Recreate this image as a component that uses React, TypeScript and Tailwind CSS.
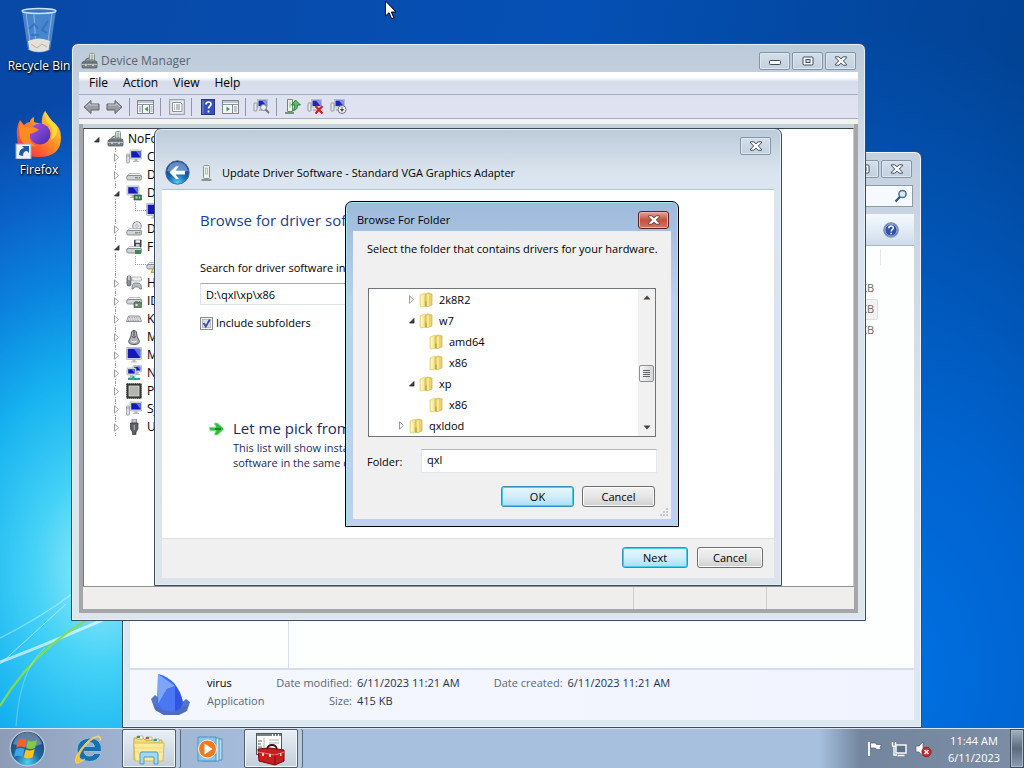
import React from "react";

const FONT = "font-['Open_Sans','Noto_Sans',sans-serif]";

/* ---------- small drawings ---------- */

const CloseGlyph = ({ red = false }: { red?: boolean }) => (
  <svg width="14" height="10" viewBox="0 0 14 10">
    <path d="M1.5 .8h3.3L7 2.800 9.200 .8h3.300v1L9.300 5l3.200 3.200v1H9.200L7 7.200 4.800 9.200H1.500v-1L4.700 5 1.500 1.800z" fill="#fff" stroke={red ? "#6b3a3a" : "#3f4a5a"} strokeWidth="1" />
  </svg>
);
const MinGlyph = () => (
  <svg width="14" height="10" viewBox="0 0 14 10">
    <rect x="1.5" y="4.5" width="11" height="4" rx="1" fill="#fff" stroke="#3f4a5a" />
  </svg>
);
const MaxGlyph = () => (
  <svg width="14" height="10" viewBox="0 0 14 10">
    <rect x="2" y="1" width="10" height="8" rx="1" fill="#fff" stroke="#3f4a5a" />
    <rect x="5" y="3.5" width="4" height="3" fill="#d5dfe9" stroke="#3f4a5a" />
  </svg>
);

const Toolbox = () => (
  <svg width="17" height="17" viewBox="0 0 17 17" className="shrink-0">
    <rect x="8.5" y=".5" width="5" height="9" rx="1" fill="#eef2ee" stroke="#8b938d" />
    <rect x="10" y="2" width="2" height="5" fill="#b8d4b0" stroke="#7f9a7a" strokeWidth=".5" />
    <path d="M2 9l3-2h8l3 2z" fill="#9da5ab" stroke="#5b6268" strokeWidth=".7" />
    <rect x="1" y="9" width="15" height="6" rx="1" fill="#7b838a" stroke="#4e555b" strokeWidth=".8" />
    <path d="M1 11.500h15" stroke="#d5d9dc" strokeWidth=".8" />
    <path d="M4 10.5h2v3H4zM11 10.5h2v3h-2z" fill="#e6e8ea" stroke="#454a4f" strokeWidth=".4" />
    <path d="M4.500 7.500Q5 5 8 5" fill="none" stroke="#565c62" />
  </svg>
);

const Screen = ({ x = 4, y = 1, w = 12, h = 9 }: { x?: number; y?: number; w?: number; h?: number }) => (
  <g>
    <rect x={x} y={y} width={w} height={h} rx=".6" fill="#e2e6ea" stroke="#a3abb5" strokeWidth=".7" />
    <rect x={x + 1.200} y={y + 1.200} width={w - 2.400} height={h - 2.600} fill="#1418b4" />
    <path d={`M${x + w / 2} ${y + 1.200}L${x + w - 1.200} ${y + 1.200}V${y + h - 1.600}z`} fill="#5b74e6" />
    <path d={`M${x + w / 2 - 1.500} ${y + h}h3v2h1.500v1h-6v-1h1.500z`} fill="#b4bac2" />
  </g>
);
const Drive = ({ y = 8 }: { y?: number }) => (
  <g>
    <path d={`M1 ${y + 2}l2.500-2.500h10l2 2.500z`} fill="#f1f2f3" stroke="#9a9ea3" strokeWidth=".6" />
    <rect x=".8" y={y + 1.500} width="14.800" height="4.500" rx="1.500" fill="#cfd2d6" stroke="#777c82" strokeWidth=".8" />
    <path d={`M9 ${y + 3.800}h3`} stroke="#555" strokeWidth=".8" />
    <circle cx="13.500" cy={y + 3.800} r=".8" fill="#37a34a" />
  </g>
);

const DeviceIcon = ({ kind }: { kind: string }) => (
  <svg width="16" height="16" viewBox="0 0 16 16" className="shrink-0">
    {kind === "computer" && (<><Screen /><rect x=".5" y="5" width="3" height="9" rx=".8" fill="#dde1e5" stroke="#82898f" strokeWidth=".7" /><path d="M1.300 7h1.500" stroke="#555" strokeWidth=".7" /></>)}
    {kind === "disk" && <Drive y={7} />}
    {kind === "warning" && (<><Drive y={6} /><path d="M10 6l5.500 9.500H5z" fill="#f5d534" stroke="#a58a10" strokeWidth=".7" /><path d="M10 9v3.500M10 13.500v1" stroke="#222" /></>)}
    {kind === "display" && (<><Screen x={1} w={12} /><path d="M8 10h7.500v5H8z" fill="#3b7f4c" stroke="#205330" strokeWidth=".6" /><path d="M9.500 11.500h2v2h-2zM13 11.500h1v2h-1z" fill="#c8d9b8" /></>)}
    {kind === "dvd" && (<><circle cx="11" cy="5" r="4.300" fill="#e3e5e8" stroke="#8d9299" /><circle cx="11" cy="5" r="1.300" fill="#fff" stroke="#8d9299" strokeWidth=".6" /><Drive y={8} /></>)}
    {kind === "floppy" && (<><rect x="8" y=".7" width="7.500" height="7.500" rx=".6" fill="#40464c" /><rect x="9.500" y="1.200" width="4.500" height="2.600" fill="#eef0f2" /><rect x="10" y="5" width="3.500" height="3" fill="#c3c8cd" /><Drive y={8} /><rect x="9" y="11" width="6" height="4" fill="#3d8a50" /></>)}
    {kind === "hid" && (<><rect x="6" y="2" width="9.500" height="4" rx=".6" fill="#eceef0" stroke="#777" strokeWidth=".7" strokeDasharray="1 .5" /><rect x="1" y="1" width="4" height="10" rx="2" fill="#8c9298" stroke="#44484c" strokeWidth=".7" /><path d="M3 1v4" stroke="#fff" /><path d="M6 14q0-6 2.500-6h4q3 0 3 6-2 1-3-2H8.500Q7.500 15 6 14z" fill="#b8bdc3" stroke="#60656b" strokeWidth=".7" /></>)}
    {kind === "ide" && (<><Drive y={5} /><path d="M8 9.500h7.500v5H8z" fill="#5f9169" stroke="#2b5034" strokeWidth=".6" /><path d="M9.500 11h2v2h-2z" fill="#dfe9d5" /></>)}
    {kind === "keyboard" && (<><path d="M2.500 5h11l2 5.500H.500z" fill="#e4e6e8" stroke="#777c82" strokeWidth=".8" /><path d="M3 6.500h10M2.500 8h11M2 9.500h12" stroke="#888d93" strokeWidth=".7" strokeDasharray="1 .7" /></>)}
    {kind === "mouse" && (<><path d="M5.500 3Q8-.5 10.500 3l.5 4 2.500 5.500Q13 15.500 8 15.500T2.500 12.500L5 7z" fill="#aeb2b7" stroke="#44484c" strokeWidth=".9" /><path d="M8 2v5M6 7.500q2 2 4 0" stroke="#33373b" strokeWidth=".9" fill="none" /><path d="M5.500 12q2.500 2.500 5 0" stroke="#fff" fill="none" /></>)}
    {kind === "monitor" && <Screen x={.5} y={.5} w={15} h={12} />}
    {kind === "network" && (<><Screen x={7} y={.5} w={8.500} h={6.500} /><Screen x={1} y={3} w={9} h={7} /><path d="M7.500 11v2M2 14h12" stroke="#27a889" strokeWidth="2" /></>)}
    {kind === "cpu" && (<><rect x=".8" y=".8" width="14.400" height="14.400" fill="#3c3f3a" stroke="#23251f" strokeDasharray="1.500 .5" /><rect x="3" y="3" width="10" height="10" fill="#b2b6b0" stroke="#e1e3df" strokeWidth=".7" /></>)}
    {kind === "usb" && (<><rect x="6" y="0" width="4.500" height="4" fill="#c5c8cb" stroke="#6c7074" strokeWidth=".7" /><path d="M4.500 4h7.500v6l-2 3v2.500H6.500V13l-2-3z" fill="#5d6165" stroke="#35383b" strokeWidth=".7" /><path d="M8.300 6v5" stroke="#c9ccce" strokeWidth=".8" /></>)}
  </svg>
);

const Twisty = ({ open }: { open: boolean }) => (
  <svg width="9" height="9" viewBox="0 0 9 9" className="shrink-0">
    {open ? <path d="M7 2.500v4.500H2.500z" fill="#404040" stroke="#262626" strokeWidth=".8" /> : <path d="M2.500 .8L6.500 4.500l-4 3.700z" fill="#fff" stroke="#9c9c9c" />}
  </svg>
);

const Folder = () => (
  <svg width="14" height="16" viewBox="0 0 14 16" className="shrink-0">
    <path d="M1 3l5-2 1 1v12l-5 1-1-1z" fill="#f6ea9c" stroke="#e0cb6a" strokeWidth=".7" />
    <path d="M6 2.500l3-1.500 4 1v11l-4 1.500-3-.5z" fill="#e9d266" stroke="#cfb04b" strokeWidth=".7" />
    <path d="M9 2.500v11.500" stroke="#faf3c4" strokeWidth="1.200" />
    <path d="M7 9.500v5" stroke="#a98e35" strokeWidth=".9" />
    <path d="M2.800 3.500v10" stroke="#fdf8d2" strokeWidth="1.200" />
  </svg>
);

/* ---------- shared controls ---------- */

const CaptionButton = ({ label, children }: { label: string; children: React.ReactNode }) => (
  <button aria-label={label} className="flex h-[18px] w-[31px] items-center justify-center rounded-[2px] border border-[#8594a8] bg-linear-to-b from-[#d3dfea] to-[#c3d0de] shadow-[inset_0_0_0_1px_#dde7f0]">
    {children}
  </button>
);

const PushButton = ({ children, primary = false, className = "w-[66px]" }: { children: React.ReactNode; primary?: boolean; className?: string }) => (
  <button
    className={
      "flex h-[21px] items-center justify-center rounded-[3px] border text-[11px] leading-4 text-black " +
      (primary
        ? "border-[#2f8fc0] bg-linear-to-b from-[#e8f6fd] via-[#d3eefb] to-[#a6def8] shadow-[inset_0_0_0_1px_#48cdf2] "
        : "border-[#707070] bg-linear-to-b from-[#f2f2f2] via-[#e6e6e6] to-[#cfcfcf] shadow-[inset_0_0_0_1px_#fafafa] ") +
      className
    }
  >
    {children}
  </button>
);

/* ---------- explorer ---------- */

const Explorer = () => (
  <section className="absolute left-[122px] top-[151px] flex h-[577px] w-[800px] flex-col rounded-t-[7px] border border-[#3c4c5c] bg-linear-to-b from-[#c3d0de] via-[#dbe5ef] to-[#dce8f0] px-[7px] pb-[7px] shadow-[inset_0_0_0_1px_#eef4f9]">
    <header className="flex h-[33px] items-start justify-end gap-[2px] px-[2px] pt-[8px]">
      <CaptionButton label="Minimize explorer"><MinGlyph /></CaptionButton>
      <CaptionButton label="Maximize explorer"><MaxGlyph /></CaptionButton>
      <CaptionButton label="Close explorer"><CloseGlyph /></CaptionButton>
    </header>
    <div className="flex h-[29px] justify-end px-px">
      <label className="flex h-[22px] w-[180px] items-center border border-[#8d9aab] bg-[#f6fafd] pr-1">
        <input aria-label="Search folder" className="min-w-0 flex-1 bg-transparent outline-none" />
        <svg width="14" height="14" viewBox="0 0 14 14"><circle cx="8.500" cy="5" r="3.600" fill="#dceaf4" stroke="#47709a" strokeWidth="1.500" /><path d="M6 7.800L1.500 12.500" stroke="#2f5478" strokeWidth="2.200" /></svg>
      </label>
    </div>
    <div className="flex h-[32px] items-center justify-end border-b border-[#a9b8cb] bg-linear-to-b from-[#f4f9fd] via-[#e3edf7] to-[#cfdbea] pr-[15px]">
      <button aria-label="Help">
        <svg width="16" height="16" viewBox="0 0 16 16"><circle cx="8" cy="8" r="7.200" fill="#2d53ac" stroke="#8694a8" strokeWidth="1.300" /><circle cx="8" cy="8" r="6" fill="none" stroke="#c5d4ee" strokeWidth=".7" /><path d="M5.800 6.300Q5.800 4 8.100 4t2.200 2c0 1.500-2.100 1.600-2.100 3.400M8.200 10.800v1.500" fill="none" stroke="#fff" strokeWidth="1.500" /></svg>
      </button>
    </div>
    <div className="flex min-h-0 flex-1 bg-[#fdfefe]">
      <aside className="w-[159px] border-r border-[#d5e1ee]" />
      <div className="flex flex-1 flex-col items-end pr-[36px] pt-[3px] text-[11px] text-[#6d6d6d]">
        <div className="mr-[-3px] h-[16px] w-px bg-[#e2e8ee]" />
        <div className="mt-[13px] flex h-[21px] items-center border border-transparent pr-[3px]">17 KB</div>
        <div className="flex h-[21px] w-[500px] items-center justify-end rounded-[2px] border border-[#dcdcdc] bg-[#f2f2f2] pr-[3px]">415 KB</div>
        <div className="flex h-[21px] items-center border border-transparent pr-[3px]">81 KB</div>
      </div>
    </div>
    <footer className="flex h-[52px] items-start border-t-2 border-[#d6dfe9] bg-linear-to-r from-[#f4f7fd] to-[#f1f4fe] pl-[21px] pt-[4px] text-[11px] leading-[18px] text-[#5a6779]">
      <svg width="40" height="42" viewBox="0 0 40 42">
        <path d="M0 25l4-4 5 4 20 5 6-5 4 3-3 9-8 4H13L4 36z" fill="#5577c6" />
        <path d="M7 0q9 2 16 9 7 8 9 20l-4 9-13 2L6 31z" fill="#3e6cf0" />
        <path d="M7 0l17 12-8 3-9 15z" fill="#7ea6f7" />
        <path d="M16 15l8-3v27l-10-1-7-8z" fill="#4b78f2" />
        <path d="M24 12q6 6 8 17l-4 9-4 1z" fill="#3154e4" />
        <path d="M3 30q6 7 20 8l10-6 4-1-2 6-8 4H13L5 36z" fill="#4a6dc2" />
      </svg>
      <div className="ml-[16px] w-[67px]">
        <div className="text-black">virus</div>
        <div>Application</div>
      </div>
      <dl className="grid grid-cols-[78px_auto] gap-x-[5px]">
        <dt className="text-right">Date modified:</dt>
        <dd className="text-[#1e3250]">6/11/2023 11:21 AM</dd>
        <dt className="text-right">Size:</dt>
        <dd className="text-[#1e3250]">415 KB</dd>
      </dl>
      <dl className="ml-[34px] flex gap-[5px]">
        <dt>Date created:</dt>
        <dd className="text-[#1e3250]">6/11/2023 11:21 AM</dd>
      </dl>
    </footer>
  </section>
);

/* ---------- device manager ---------- */

type Row = { depth: number; open?: boolean; kind: string; text: string };
const DEVICES: Row[] = [
  { depth: 1, open: false, kind: "computer", text: "Computer" },
  { depth: 1, open: false, kind: "disk", text: "Disk drives" },
  { depth: 1, open: true, kind: "display", text: "Display adapters" },
  { depth: 2, kind: "monitor", text: "Standard VGA" },
  { depth: 1, open: false, kind: "dvd", text: "DVD/CD-ROM drives" },
  { depth: 1, open: true, kind: "floppy", text: "Floppy drives" },
  { depth: 2, kind: "warning", text: "Floppy" },
  { depth: 1, open: false, kind: "hid", text: "Human Interface Devices" },
  { depth: 1, open: false, kind: "ide", text: "IDE ATA controllers" },
  { depth: 1, open: false, kind: "keyboard", text: "Keyboards" },
  { depth: 1, open: false, kind: "mouse", text: "Mice" },
  { depth: 1, open: false, kind: "monitor", text: "Monitors" },
  { depth: 1, open: false, kind: "network", text: "Network adapters" },
  { depth: 1, open: false, kind: "cpu", text: "Processors" },
  { depth: 1, open: false, kind: "computer", text: "System devices" },
  { depth: 1, open: false, kind: "usb", text: "USB controllers" },
];

const Panel = ({ dir }: { dir: "left" | "right" }) => (
  <svg width="17" height="16" viewBox="0 0 17 16">
    <rect x=".5" y="1.500" width="16" height="13" fill="#f4f6f8" stroke="#7d8791" />
    <path d="M1 3h15M1 5.500h15" stroke="#8b959f" strokeWidth="1" />
    {dir === "left" ? (
      <><path d="M5.500 6v8M12.500 6v8" stroke="#7d8791" /><path d="M2 8h2.500M2 10h2.500M2 12h2.500M13.500 8h2M13.500 10h2M13.500 12h2" stroke="#8b959f" /><path d="M11 7.500v5L7.500 10z" fill="#43a047" /></>
    ) : (
      <><path d="M10.500 6v8" stroke="#7d8791" /><path d="M12 8h3M12 10h3M12 12h3" stroke="#8b959f" /><path d="M4.500 7.500v5L8 10z" fill="#43a047" /></>
    )}
  </svg>
);
const Arrow = ({ flip = false }: { flip?: boolean }) => (
  <svg width="17" height="16" viewBox="0 0 17 16" className={flip ? "-scale-x-100" : ""}>
    <path d="M1 8l7-6.500V5h8v6H8v3.500z" fill="#999ca1" stroke="#5f6369" />
    <path d="M3 8l4-3.500v1.500h8" fill="none" stroke="#c9ccd0" />
  </svg>
);
const Divider = () => <div className="mr-[4px] ml-[3px] h-[18px] w-px bg-[#8c97ab]" />;

const Tool = ({ label, children }: { label: string; children: React.ReactNode }) => (
  <button aria-label={label} className="flex w-[23px] items-center justify-center">{children}</button>
);
const MiniPc = ({ children }: { children: React.ReactNode }) => (
  <svg width="17" height="17" viewBox="0 0 17 17">
    <rect x="4.500" y="1.500" width="10" height="7.500" fill="#dbe0e6" stroke="#a8b0ba" strokeWidth=".7" />
    <path d="M5.500 2.500h8v5.500h-8z" fill="#2026b8" />
    <path d="M9 2.500h4.500V8z" fill="#8296ec" />
    <rect x="1" y="5" width="3" height="8" rx=".7" fill="#e6e9ec" stroke="#7e858c" strokeWidth=".8" />
    <path d="M6 11h5v2H6z" fill="#b5bbc2" />
    {children}
  </svg>
);

const DeviceManager = () => (
  <section className="absolute left-[71px] top-[43px] flex h-[578px] w-[795px] flex-col rounded-t-[7px] border border-[#3c4c5c] bg-linear-to-b from-[#bccbd9] via-[#d9e2ec] via-25% to-[#dde6ea] px-[7px] pb-[7px] shadow-[inset_0_0_0_1px_#e6eef5]">
    <header className="flex h-[28px] items-start justify-between">
      <h1 className="flex items-center gap-[3px] pl-[2px] pt-[8px] text-[12px] leading-[18px] text-[#5a6470]"><Toolbox />Device Manager</h1>
      <div className="flex gap-[2px] px-[2px] pt-[8px]">
        <CaptionButton label="Minimize"><MinGlyph /></CaptionButton>
        <CaptionButton label="Maximize"><MaxGlyph /></CaptionButton>
        <CaptionButton label="Close Device Manager"><CloseGlyph /></CaptionButton>
      </div>
    </header>
    <nav className="flex h-[23px] items-center gap-[15px] border-b border-[#a5aec0] bg-linear-to-b from-[#ffffff] from-25% via-[#d6dcea] via-45% to-[#dce1ef] pl-[10px] text-[12px] text-black">
      <button>File</button><button>Action</button><button>View</button><button>Help</button>
    </nav>
    <div className="flex h-[24px] items-center border-b border-[#a5aec0] bg-linear-to-b from-[#dde2f0] to-[#e2e2f2] pl-px">
      <Tool label="Back"><Arrow /></Tool>
      <Tool label="Forward"><Arrow flip /></Tool>
      <Divider />
      <Tool label="Show console tree"><Panel dir="left" /></Tool>
      <Divider />
      <Tool label="Properties">
        <svg width="16" height="16" viewBox="0 0 16 16"><rect x=".7" y=".7" width="14.600" height="14.600" fill="#e8ecef" stroke="#8a939c" /><path d="M3.500 3.500h8l1.500 1.500v7.500H3.500z" fill="#fff" stroke="#8a939c" /><path d="M5 6h1M7 6h4M5 8h1M7 8h4M5 10h1M7 10h4" stroke="#7d868f" /></svg>
      </Tool>
      <Divider />
      <Tool label="Help">
        <svg width="14" height="16" viewBox="0 0 14 16"><rect x=".5" y=".5" width="13" height="15" fill="#3a4fb4" stroke="#26378a" /><path d="M2 1v14" stroke="#7e8fdc" /><path d="M5 5.500Q5 3 7.500 3t2.500 2.200C10 7 7.500 7.200 7.500 9.500M7.500 11.500v2" fill="none" stroke="#fff" strokeWidth="1.700" /></svg>
      </Tool>
      <Tool label="Show action pane"><Panel dir="right" /></Tool>
      <Divider />
      <Tool label="Scan for hardware changes">
        <MiniPc><circle cx="10.500" cy="9.500" r="3" fill="#e3edf6" stroke="#7b848e" /><path d="M12.500 11.500l3.500 3.500" stroke="#6b737c" strokeWidth="1.800" /></MiniPc>
      </Tool>
      <Divider />
      <Tool label="Update driver">
        <svg width="17" height="17" viewBox="0 0 17 17"><path d="M3.500 1.500h5v12h-5z" fill="#edf2ea" stroke="#6f8a70" /><path d="M5 3.500h2v6H5z" fill="#b9dba9" /><path d="M1 15h9" stroke="#4c7a50" strokeWidth="1.500" /><path d="M11.500 2L16.500 7h-3c0 4-1.500 5-4.500 5.500 1.500-1.500 1.500-3 1.500-5.500h-3z" fill="#5dbb6c" stroke="#146a2a" strokeWidth=".8" /></svg>
      </Tool>
      <Tool label="Uninstall"><MiniPc><path d="M8.500 8l7 7.500M15.500 8l-7 7.500" stroke="#d81e1e" strokeWidth="2.200" /></MiniPc></Tool>
      <Tool label="Disable"><MiniPc><circle cx="12" cy="11.500" r="4" fill="#f1f2f3" stroke="#6d747b" /><path d="M12 9v3M10.500 11.500l1.500 1.800 1.500-1.800z" fill="#444" stroke="#444" strokeWidth=".9" /></MiniPc></Tool>
    </div>
    <div className="h-[5px] bg-[#f3f3ee]" />
    <div className="flex min-h-0 flex-1 flex-col border-x-4 border-b-4 border-[#a4a6aa] bg-[#c6d2da] pt-[4px]">
      <div className="min-h-0 flex-1 border-t border-l border-r border-t-[#3d4650] border-l-[#70767c] border-r-[#c9c9c9] bg-white">
        <ul className="pt-px text-[12px] leading-[18px] text-black">
          <li className="flex h-[18px] items-center pl-[8px]"><Twisty open /><span className="w-[6px]" /><Toolbox /><span className="pl-[4px]">NoFo-PC</span></li>
          {DEVICES.map((d) => (
            <li key={d.text} className="flex h-[18px] pl-[31px]">
              <div className="flex w-full items-center border-l border-dotted border-[#9a9a9a]">
                {d.depth === 1 ? (
                  <span className="-ml-[4px] flex w-[14px] items-center bg-white"><Twisty open={!!d.open} /></span>
                ) : (
                  <span className="ml-[19px] h-full w-[11px]"><span className="block h-[9px] border-b border-l border-dotted border-[#9a9a9a]" /></span>
                )}
                <DeviceIcon kind={d.kind} />
                <span className="whitespace-nowrap pl-[5px]">{d.text}</span>
              </div>
            </li>
          ))}
        </ul>
      </div>
      <div className="flex h-[23px] border-t border-[#8e9196] bg-[#f0eeec]">
        <div className="flex-1 border-r border-[#d2d0ce]" />
        <div className="w-[133px] border-r border-[#d2d0ce]" />
        <div className="w-[87px]" />
      </div>
    </div>
  </section>
);

/* ---------- wizard ---------- */

const Wizard = () => (
  <section className="absolute left-[154px] top-[128px] flex h-[458px] w-[628px] flex-col rounded-t-[7px] border border-[#3c4c5c] bg-linear-to-b from-[#bccbd9] via-[#dbe5ef] via-10% to-[#dce3ec] px-[7px] pb-[7px] shadow-[inset_0_0_0_1px_#e6eef5]">
    <header className="flex h-[61px] flex-col border-b border-[#b4c4d4]">
      <div className="flex h-[31px] justify-end px-[3px] pt-[8px]"><CaptionButton label="Close wizard"><CloseGlyph /></CaptionButton></div>
      <div className="flex items-center pl-[3px] text-[11px] leading-[18px] text-black">
        <button aria-label="Go back">
          <svg width="25" height="25" viewBox="0 0 25 25">
            <defs><radialGradient id="back" cx=".5" cy=".95" r=".9"><stop offset="0" stopColor="#58d0f4" /><stop offset=".45" stopColor="#1769b8" /><stop offset="1" stopColor="#123a80" /></radialGradient></defs>
            <circle cx="12.500" cy="12.500" r="11.700" fill="url(#back)" stroke="#51698c" />
            <path d="M2 11Q4 2 12.500 2T23 11Q12 13.500 2 11z" fill="#8fb4e4" opacity=".65" />
            <path d="M4.500 12.500l6.500-6.200h3l-3.500 4.500h9.500v3.600H10.500l3.500 4.500h-3z" fill="#fff" />
          </svg>
        </button>
        <svg width="13" height="18" viewBox="0 0 13 18" className="ml-[10px] mr-[9px]"><rect x="3.500" y="1.500" width="6" height="13" rx="1" fill="#f0f3f0" stroke="#84908a" /><rect x="5.500" y="4" width="2" height="6" fill="#dfe9d9" stroke="#a9b8a6" strokeWidth=".8" /><path d="M1.500 16h10" stroke="#6f7a74" strokeWidth="1.500" /></svg>
        <h2>Update Driver Software - Standard VGA Graphics Adapter</h2>
      </div>
    </header>
    <div className="flex min-h-0 flex-1 flex-col overflow-hidden whitespace-nowrap bg-white pl-[38px] pt-[18px] text-[11px] leading-4 text-black">
      <h3 className="text-[15px] leading-6 text-[#1b3f8c]">Browse for driver software on your computer</h3>
      <label htmlFor="location" className="mt-[28px]">Search for driver software in this location:</label>
      <input id="location" defaultValue="D:\qxl\xp\x86" className="mt-[7px] h-[22px] w-[440px] border border-[#dfe3e8] border-t-[#a9adb3] bg-white px-[5px] outline-none" />
      <label className="mt-[10px] flex items-center gap-[3px]">
        <input type="checkbox" defaultChecked className="peer sr-only" />
        <svg width="13" height="13" viewBox="0 0 13 13"><rect x=".5" y=".5" width="12" height="12" fill="#f2f4f6" stroke="#8a8f94" /><rect x="2.500" y="2.500" width="8" height="8" fill="#dce1e7" stroke="#b5bcc6" /><path d="M3.500 6l2.300 3.500L9.800 2.500" fill="none" stroke="#3d4c96" strokeWidth="1.800" /></svg>
        Include subfolders
      </label>
      <a href="#pick" className="mt-[85px] flex pl-[9px] text-[#1d2a5e]">
        <svg width="15" height="14" viewBox="0 0 15 14" className="mr-[9px] mt-[6px]"><path d="M0 5.200h7L5 1h3.500l6.500 6-6.500 6H5l2-4.200H1z" fill="#2fbe3e" stroke="#a5e3aa" strokeWidth=".8" /><path d="M6 7h6" stroke="#0f8f22" strokeWidth="2" /></svg>
        <span>
          <span className="block text-[15px] leading-6">Let me pick from a list of device drivers</span>
          <span className="block leading-[15px]">This list will show installed driver software compatible with the device, and all driver</span>
          <span className="block leading-[15px]">software in the same category as the device.</span>
        </span>
      </a>
    </div>
    <footer className="flex h-[40px] items-start justify-end gap-[9px] border-t border-[#dfdfdf] bg-[#f0f0f0] pr-[11px] pt-[8px]">
      <PushButton primary>Next</PushButton>
      <PushButton>Cancel</PushButton>
    </footer>
  </section>
);

/* ---------- folder picker ---------- */

const FOLDERS: { depth: number; open?: boolean; text: string }[] = [
  { depth: 1, open: false, text: "2k8R2" },
  { depth: 1, open: true, text: "w7" },
  { depth: 2, text: "amd64" },
  { depth: 2, text: "x86" },
  { depth: 1, open: true, text: "xp" },
  { depth: 2, text: "x86" },
  { depth: 0, open: false, text: "qxldod" },
];
const INDENT = ["pl-[28px]", "pl-[38px]", "pl-[48px]"];

const FolderPicker = () => (
  <section className="absolute left-[345px] top-[201px] flex h-[326px] w-[334px] flex-col rounded-t-[7px] border border-black bg-linear-to-b from-[#9ebadb] via-[#b9d1ea] via-30% to-[#bcd2ec] px-[7px] pb-[7px] shadow-[inset_0_0_0_1px_#a9e2f2]">
    <header className="flex h-[29px] shrink-0 items-center justify-between pl-[4px] pr-[2px] pt-[6px]">
      <h2 className="text-[11px] leading-4 text-black">Browse For Folder</h2>
      <button aria-label="Close folder dialog" className="flex h-[18px] w-[31px] items-center justify-center rounded-[3px] border border-[#5b2226] bg-linear-to-b from-[#dfa69c] via-[#c4503c] to-[#cf7862] shadow-[inset_0_0_0_1px_#e9b5a8]"><CloseGlyph red /></button>
    </header>
    <div className="relative flex flex-1 flex-col bg-[#f0f0f0] px-[14px] text-[11px] leading-4 text-black">
      <p className="mt-[10px] whitespace-nowrap">Select the folder that contains drivers for your hardware.</p>
      <div className="ml-px mt-[31px] mr-px flex h-[149px] border border-[#6f747a] bg-white">
        <ul className="flex-1">
          {FOLDERS.map((f, i) => (
            <li key={i} className={"flex h-[21px] items-center " + INDENT[f.depth]}>
              <span className="flex w-[12px]">{f.open !== undefined && <Twisty open={f.open} />}</span>
              <Folder />
              <span className="pl-[6px]">{f.text}</span>
            </li>
          ))}
        </ul>
        <div className="flex w-[17px] flex-col items-center bg-[#f1f1f1] py-[6px]">
          <svg width="8" height="5" viewBox="0 0 8 5"><path d="M4 .5L7.500 4.500h-7z" fill="#444" /></svg>
          <div className="mt-[65px] flex h-[17px] w-[15px] items-center justify-center rounded-[2px] border border-[#8c9096] bg-linear-to-r from-[#f6f6f6] to-[#d6d6d6]">
            <svg width="7" height="8" viewBox="0 0 7 8"><path d="M0 .5h7M0 2.500h7M0 4.500h7M0 6.500h7" stroke="#60656b" strokeWidth="1" /></svg>
          </div>
          <svg width="8" height="5" viewBox="0 0 8 5" className="mt-auto"><path d="M4 4.500L7.500 .5h-7z" fill="#444" /></svg>
        </div>
      </div>
      <div className="mt-[12px] flex">
        <label htmlFor="folder" className="w-[54px] pt-[5px]">Folder:</label>
        <input id="folder" defaultValue="qxl" className="h-[24px] min-w-0 flex-1 border border-[#e3e6ea] border-t-[#b4b8bd] bg-white px-[5px] pb-[3px] outline-none" />
      </div>
      <div className="mt-[13px] flex justify-end gap-[8px] pr-[2px]">
        <PushButton primary className="w-[73px]">OK</PushButton>
        <PushButton className="w-[73px]">Cancel</PushButton>
      </div>
      <svg width="10" height="10" viewBox="0 0 10 10" className="absolute bottom-[2px] right-[2px]"><path d="M7 1h2v2H7zM7 4h2v2H7zM7 7h2v2H7zM4 4h2v2H4zM4 7h2v2H4zM1 7h2v2H1z" fill="#c2c6ca" /></svg>
    </div>
  </section>
);

/* ---------- desktop ---------- */

const Wallpaper = () => (
  <svg className="absolute bottom-0 left-0" width="130" height="140" viewBox="0 0 130 140">
    <path d="M0 50Q40 30 72 6" stroke="#fff" strokeWidth="1.500" opacity=".35" fill="none" />
    <path d="M0 74Q50 55 130 20" stroke="#fff" strokeWidth="3" opacity=".6" fill="none" />
    <path d="M0 76L66 16" stroke="#fff" strokeWidth="1" opacity=".5" />
    <path d="M0 118Q42 48 122 14" stroke="#86dc4c" strokeWidth="2.200" fill="none" />
    <path d="M16 138Q20 80 45 60" stroke="#bff2ff" strokeWidth="1" opacity=".4" fill="none" />
  </svg>
);

const LABEL = "text-[12px] leading-4 text-white [text-shadow:0_1px_2px_#000,1px_1px_2px_#000]";

const TaskButton = ({ label, active = false, children }: { label: string; active?: boolean; children: React.ReactNode }) => (
  <button
    aria-label={label}
    className={
      "flex h-[39px] w-[54px] items-center justify-center rounded-[2px] border " +
      (active ? "border-[#4e5d70] bg-linear-to-b from-[#e9eff5] to-[#c3cfdc] shadow-[inset_0_0_0_1px_#f4f8fb,4px_0_0_#b9c9dc,5px_0_0_#58677a]" : "border-transparent")
    }
  >
    {children}
  </button>
);

export default function App() {
  return (
    <main className={"flex min-h-screen flex-col overflow-hidden bg-[#0a4fae] " + FONT}>
      <div className="relative min-h-[728px] flex-1 overflow-hidden bg-[radial-gradient(ellipse_330px_470px_at_100px_570px,#9aebfb_0%,#45d2f7_20%,#16b2f0_42%,#0a84de_62%,#0a62c8_80%,transparent_100%),radial-gradient(ellipse_420px_640px_at_88%_92%,#0070e2_0%,#0064d0_35%,transparent_100%),linear-gradient(100deg,#0848a6_0%,#0550b4_50%,#003f8c_100%)]">
        <Wallpaper />
        <div className="absolute left-0 top-[7px] flex w-[78px] flex-col items-center">
          <svg width="38" height="48" viewBox="0 0 38 48">
            <path d="M2 4L8 43q11 5 22 0L36 4z" fill="#5f9ad8" opacity=".75" />
            <path d="M6 6l5 36M32 6l-5 36M14 7l2 36" stroke="#a9cdf0" strokeWidth="1" opacity=".7" />
            <ellipse cx="19" cy="4" rx="17" ry="2.500" fill="#3d73b8" stroke="#cfe2f4" strokeWidth="1.300" />
            <path d="M8 34q11-5 22 0l-1.500 9q-9.500 4-19 0z" fill="#e4e0da" />
            <path d="M11 37l6 4 5-4 5 3" stroke="#b8afa2" fill="none" />
            <path d="M9 22l5-5 4 5M28 14l-6 9 5 3M11 28h8" stroke="#2b6cbe" strokeWidth="2" fill="none" opacity=".7" />
          </svg>
          <span className={"mt-[3px] whitespace-nowrap " + LABEL}>Recycle Bin</span>
        </div>
        <div className="absolute left-0 top-[110px] flex w-[78px] flex-col items-center">
          <svg width="48" height="49" viewBox="0 0 48 49">
            <defs>
              <linearGradient id="fox" x1="1" y1="0" x2="0" y2="1"><stop offset="0" stopColor="#fff04a" /><stop offset=".4" stopColor="#ff9a24" /><stop offset=".7" stopColor="#ff5434" /><stop offset="1" stopColor="#e62065" /></linearGradient>
              <linearGradient id="globe" x1="0" y1="0" x2="1" y2="1"><stop offset="0" stopColor="#a356f0" /><stop offset="1" stopColor="#4a2ba8" /></linearGradient>
            </defs>
            <path d="M30 1q4 6 7 10 9 6 9 16 0 20-22 20T2 26Q1 17 5 10l4 5q3-3 6-3 0-3 4-5v5q3 1 8 2-1-7 3-13z" fill="url(#fox)" />
            <circle cx="25" cy="24" r="10.500" fill="url(#globe)" />
            <path d="M5 12l5 5q8-2 14 3-5 3-9 4-2 8 6 12-12 2-16-8-2-9 0-16z" fill="#ff8a22" />
            <path d="M30 1q-1 9 5 14 4 5 1 15 7-4 6-12-1-4-5-7-4-4-7-10z" fill="#ffd83a" />
            <rect x="1" y="34" width="15" height="15" fill="#f0f4f8" stroke="#9aa8b8" />
            <path d="M4 45q0-6 5-7l-2-2h7v7l-2-2q-4 0-4 5z" fill="#1f5aa8" />
          </svg>
          <span className={"mt-[3px] " + LABEL}>Firefox</span>
        </div>

        <Explorer />
        <DeviceManager />
        <Wizard />
        <FolderPicker />

        <svg width="13" height="20" viewBox="0 0 13 20" className="absolute left-[384px] top-0"><path d="M1.500 1v15l3.500-3.300 2.600 6 2.300-1-2.600-5.700H12z" fill="#fff" stroke="#000" /></svg>
      </div>

      <footer className="flex h-[40px] items-center border-t border-[#dbe5f0] bg-[linear-gradient(90deg,#8d9db8_0%,#9fb3d0_12%,#a6c0de_30%,#a6c0de_80%,#73869e_84%,#7c8da4_100%)]">
        <button aria-label="Start" className="flex w-[54px] justify-center">
          <svg width="37" height="37" viewBox="0 0 37 37">
            <defs><radialGradient id="orb" cx=".5" cy=".9" r=".9"><stop offset="0" stopColor="#4fd2f2" /><stop offset=".4" stopColor="#1e6aa4" /><stop offset="1" stopColor="#1d3f66" /></radialGradient></defs>
            <circle cx="18.500" cy="18.500" r="17.300" fill="url(#orb)" stroke="#b6cadd" strokeWidth="1.200" />
            <path d="M4 14Q8 2 18.500 2T33 14q-14 6-29 0z" fill="#fff" opacity=".3" />
            <path d="M9 10.500q4.500-2.500 8.500-.5l-1.800 7.500q-4-2-8.500.5z" fill="#f2642c" />
            <path d="M19 10.500q4.500 2 9-.5l-2 8q-4.500 2-8.700 0z" fill="#8dc63f" />
            <path d="M6.800 19.500q4.500-2.500 8.600-.5l-2 7.800q-4-2-8.500.2z" fill="#3fa6e8" />
            <path d="M16.800 19.500q4.500 2 8.900-.2l-2 8q-4.500 2.200-8.900-.1z" fill="#fcc420" />
          </svg>
        </button>
        <div className="flex flex-1 items-center gap-[7px] pl-[7px]">
          <TaskButton label="Internet Explorer">
            <svg width="32" height="32" viewBox="0 0 32 32">
              <path d="M29.500 18.500H12q.5 4.500 5.500 4.500 3.500 0 5-2.500h6.500Q26 28.500 17.500 28.500 5 28 5 17T17.500 5Q30.500 5.500 29.500 18.500zM12.200 13.500H22.500q-.5-4-5-4t-5.300 4z" fill="#1c6fae" stroke="#8fd0f0" strokeWidth=".8" />
              <path d="M28 8q2-5-2-5Q18 4 9.500 15 1 27 4 30q3 1 9-4-5 3-6-1 0-5 7-13 9-9 13-8 1 1 1 4z" fill="#f8c22c" stroke="#fbe28a" strokeWidth=".6" />
            </svg>
          </TaskButton>
          <TaskButton label="Windows Explorer" active>
            <svg width="34" height="32" viewBox="0 0 34 32">
              <path d="M2 5h9l2 2h17v20H2z" fill="#f4dc7a" stroke="#c9a93e" />
              <path d="M5 3h6v3H5zM14 4h6v3h-6zM22 6h5v3h-5z" fill="#fff" stroke="#9aa060" strokeWidth=".6" />
              <path d="M5 3h3v2H5z" fill="#33a04a" /><path d="M14 4h3v2h-3z" fill="#d64a3a" /><path d="M22 6h3v2h-3z" fill="#3d86cf" />
              <path d="M2 10h30l-1 18H3z" fill="#fbeb9e" stroke="#d9bb55" />
              <path d="M3 15h28M3 19h28" stroke="#f3d871" />
              <path d="M8 31V21q0-2 2-2h14q2 0 2 2v10h-4v-7H12v7z" fill="#a5d8ef" stroke="#4c9cc4" />
            </svg>
          </TaskButton>
          <TaskButton label="Media Player">
            <svg width="28" height="28" viewBox="0 0 28 28">
              <path d="M10 4h16v21H10z" fill="#b6dcf0" stroke="#4e94c0" /><path d="M6 3h17v23H6z" fill="#cbe8f6" stroke="#4e94c0" /><path d="M2 2h18v24H2z" fill="#8dc5e6" stroke="#4e94c0" />
              <circle cx="11.500" cy="14" r="9" fill="#ee7a1c" stroke="#fff" strokeWidth=".9" />
              <path d="M8.500 8.500l8 5.500-8 5.500z" fill="#fff" />
            </svg>
          </TaskButton>
          <TaskButton label="Device Manager" active>
            <svg width="32" height="34" viewBox="0 0 32 34">
              <rect x="1.500" y="1.500" width="25" height="21" fill="#fff" stroke="#50575f" />
              <path d="M1 3h26" stroke="#50575f" strokeWidth="1.500" strokeDasharray="16 1 2 1 2 1 2 1" /><path d="M9 6v16M14 8h10M14 11h10" stroke="#a8afb6" /><path d="M3 9h4M3 12h3M3 15h4" stroke="#59616a" />
              <path d="M12 17q1-4 5-4t5 4" fill="none" stroke="#3e1010" strokeWidth="1.800" />
              <path d="M3 17l12-1 14 2v11l-9 4-16-4z" fill="#c81e22" stroke="#75080c" />
              <path d="M3 20l17 3 9-3" stroke="#f07a72" fill="none" /><path d="M20 23v9" stroke="#7f0b10" />
              <path d="M7 21h2v3H7zM14 22h2v3h-2zM25 21h1.500v3H25z" fill="#e9d8b0" />
            </svg>
          </TaskButton>
        </div>
        <div className="mr-[6px] flex items-center gap-[8px]">
          <svg width="16" height="16" viewBox="0 0 16 16"><path d="M2 1v14" stroke="#fff" strokeWidth="1.800" /><path d="M3.500 2h5l1 1.500h5l-1.500 3 1.500 2h-5L8.500 7h-5z" fill="#fff" stroke="#3e4c5e" strokeWidth=".6" /></svg>
          <svg width="16" height="16" viewBox="0 0 16 16"><rect x="5" y="4" width="10" height="8" fill="#5f7188" stroke="#fff" strokeWidth="1.400" /><path d="M6.500 14.500h7M1.500 1v3q0 1.500 1.500 1.500T4.500 4V1M3 5.500V14h3" stroke="#fff" strokeWidth="1.400" fill="none" /></svg>
          <svg width="17" height="16" viewBox="0 0 17 16"><path d="M1 5h3l4-4v14l-4-4H1z" fill="#fff" stroke="#4d5a6c" strokeWidth=".7" /><circle cx="11.500" cy="11" r="4.700" fill="#d3262a" stroke="#8a1216" strokeWidth=".7" /><path d="M9.500 9l4 4M13.500 9l-4 4" stroke="#fff" strokeWidth="1.600" /></svg>
        </div>
        <time className="w-[72px] text-center text-[11px] leading-[17px] text-white">11:44 AM<br />6/11/2023</time>
        <button aria-label="Show desktop" className="h-[39px] w-[14px] border border-[#3f4e60] bg-linear-to-b from-[#a4b1c0] via-[#5b6c80] to-[#8c9db0] shadow-[inset_0_0_0_1px_#a9b7c7]" />
      </footer>
    </main>
  );
}
